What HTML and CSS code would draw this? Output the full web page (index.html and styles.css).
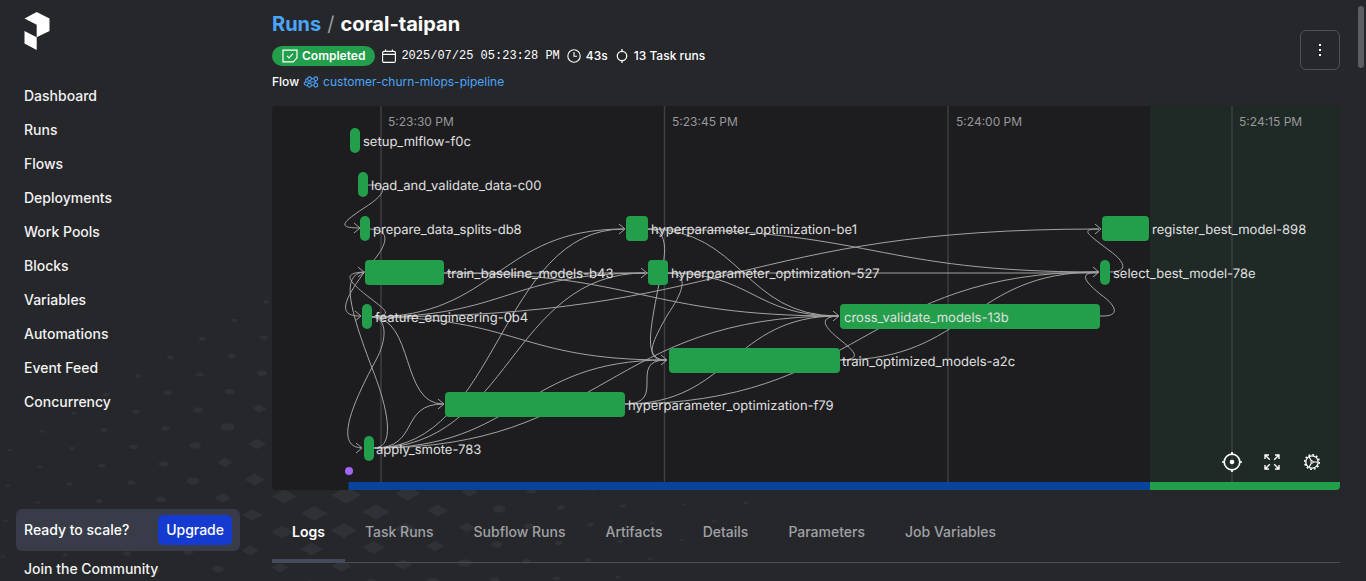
FILE: index.html
```html
<!DOCTYPE html>
<html lang="en">
<head>
<meta charset="utf-8">
<title>Runs / coral-taipan</title>
<link rel="stylesheet" href="styles.css">
</head>
<body>
<svg class="backdrop" id="backdrop" aria-hidden="true"></svg>
<div class="app">
  <aside class="sidebar">
    <a class="logo" href="#" aria-label="Home">
      <svg width="26" height="38" viewBox="0 0 26 38" fill="#fff"><path d="M12.7 0 25.5 6.5V19L12.7 25.3V12.7L.5 6.5zM.5 19 12.7 25.3V38L.5 31.5z"/></svg>
    </a>
    <nav class="nav">
      <a href="#">Dashboard</a>
      <a href="#">Runs</a>
      <a href="#">Flows</a>
      <a href="#">Deployments</a>
      <a href="#">Work Pools</a>
      <a href="#">Blocks</a>
      <a href="#">Variables</a>
      <a href="#">Automations</a>
      <a href="#">Event Feed</a>
      <a href="#">Concurrency</a>
    </nav>
    <div class="upgrade">
      <span>Ready to scale?</span>
      <button type="button" class="upgrade-button">Upgrade</button>
    </div>
    <nav class="nav"><a href="#">Join the Community</a></nav>
  </aside>

  <main class="main">
    <header class="header">
      <div class="heading">
        <h1 class="crumbs"><a href="#">Runs</a><span class="slash">/</span><span>coral-taipan</span></h1>
        <div class="meta">
          <span class="badge">
            <svg width="16" height="14" viewBox="0 0 16 14" fill="none" stroke="currentColor" stroke-width="1.2"><path d="M1 1.2h14v7.6L11.200 12.800H1z"/><path d="m5 6.800 2 2L11 4.600"/></svg>
            Completed
          </span>
          <span class="meta-item">
            <svg width="14" height="14" viewBox="0 0 14 14" fill="none" stroke="currentColor" stroke-width="1.1"><rect x=".6" y="2.4" width="12.8" height="11" rx="1.4"/><path d="M.6 5.4h12.8M3.6.4v2M10.4.4v2"/></svg>
            <time class="mono">2025/07/25 05:23:28 PM</time>
          </span>
          <span class="meta-item">
            <svg width="14" height="14" viewBox="0 0 14 14" fill="none" stroke="currentColor" stroke-width="1.1"><circle cx="7" cy="7" r="6.2"/><path d="M7 3v4.2h3"/></svg>
            43s
          </span>
          <span class="meta-item">
            <svg width="14" height="14" viewBox="0 0 14 14" fill="none" stroke="currentColor" stroke-width="1.3"><circle cx="7" cy="7" r="4.7"/><path d="M7 0v2.3M7 11.7V14"/></svg>
            13 Task runs
          </span>
        </div>
        <div class="flow-row">
          <span>Flow</span>
          <svg class="flow-icon" width="16" height="12" viewBox="0 0 16 12" fill="none" stroke="currentColor" stroke-width="1.100"><circle cx="6.500" cy="2.800" r="1.900"/><circle cx="12.800" cy="2.800" r="1.900"/><circle cx="6.500" cy="9.200" r="1.900"/><circle cx="12.800" cy="9.200" r="1.900"/><path d="M8.400 2.800h2.500M8.400 9.200h2.500M4.600 2.800H3.600A1.700 1.700 0 0 0 3.600 6H12.800V4.700M4.600 9.200H3.200C.4 9.200.4 6 3.200 6"/></svg>
          <a href="#">customer-churn-mlops-pipeline</a>
        </div>
      </div>
      <button type="button" class="menu-button" aria-label="Run actions">
        <svg width="4" height="14" viewBox="0 0 4 14" fill="#fff"><path d="M1 1h2v2H1zM1 6h2v2H1zM1 11h2v2H1z"/></svg>
      </button>
    </header>

    <section class="graph" aria-label="Run graph">
      <svg class="graph-canvas" viewBox="272 106 1068 384">
        <rect class="after" x="1150" y="106" width="190" height="384"/>
        <path class="grid" d="M381 106V482M664.500 106V482M948 106V482M1232 106V482"/>
        <g class="ticks">
          <text x="388" y="126">5:23:30 PM</text>
          <text x="672" y="126">5:23:45 PM</text>
          <text x="956" y="126">5:24:00 PM</text>
          <text x="1239" y="126">5:24:15 PM</text>
        </g>
        <g class="edges">
          <path d="M368 185H374C390 186 382 197 364 208C340 224 338 228 361 228"/>
          <path d="M370 229C398 230 379 254 374 260C340 302 338 316 360 316"/>
          <path d="M371 317C396 316 384 309 370 298C345 279 344 273 364 272"/>
          <path d="M371 317C388 317 387 340 376 360C350 408 335 447 362 448"/>
          <path d="M374 448C396 448 388 408 372 368C350 310 340 274 364 272"/>
          <path d="M371 317C415 317 400 404 443 404"/>
          <path d="M371 317C497 317 497 229 624 229"/>
          <path d="M371 317C508 317 508 273 645 273"/>
          <path d="M371 317C518 317 518 360 666 360"/>
          <path d="M371 317C735 317 735 229 1099 229"/>
          <path d="M444 273H1098"/>
          <path d="M444 273C641 273 641 316 838 316"/>
          <path d="M648 229C873 229 873 272 1098 272"/>
          <path d="M648 229C743 229 743 316 838 316"/>
          <path d="M648 229C676 229 661 272 657 294C648 340 646 360 666 360"/>
          <path d="M668 273C753 273 753 316 838 316"/>
          <path d="M668 273C692 273 681 295 668 314C652 342 643 360 666 360"/>
          <path d="M625 404C668 404 627 360 666 360"/>
          <path d="M625 404C731 404 731 316 838 316"/>
          <path d="M625 404C862 404 862 272 1098 272"/>
          <path d="M840 360C867 360 850 348 838 338C822 325 820 317 838 316"/>
          <path d="M840 360C969 360 969 272 1098 272"/>
          <path d="M374 448C420 448 399 404 443 404"/>
          <path d="M374 448C499 448 499 229 624 229"/>
          <path d="M374 448C510 448 510 273 645 273"/>
          <path d="M374 448C520 448 520 360 666 360"/>
          <path d="M374 448C606 448 606 316 838 316"/>
          <path d="M1100 316C1122 317 1116 305 1100 294C1082 279 1080 273 1098 272"/>
          <path d="M1110 272C1130 272 1124 261 1110 251C1086 233 1080 229 1099 229"/>
          <path d="m354 223 6 5-6 5M358 267l6 5-6 5M355 311l6 5-6 5M356 443l6 5-6 5M438 399l6 5-6 5M619 224l6 5-6 5M641 268l6 5-6 5M661 355l6 5-6 5M833 311l6 5-6 5M1093 267l6 5-6 5M1095 224l6 5-6 5"/>
        </g>
        <g class="bars">
          <rect x="350" y="128" width="10" height="25" rx="5"/>
          <rect x="358" y="172" width="10" height="25" rx="5"/>
          <rect x="360" y="216" width="10" height="25" rx="5"/>
          <rect x="365" y="260" width="79" height="25" rx="4"/>
          <rect x="362" y="304" width="10" height="25" rx="5"/>
          <rect x="445" y="392" width="180" height="25" rx="4"/>
          <rect x="364" y="436" width="10" height="25" rx="5"/>
          <rect x="626" y="216" width="22" height="25" rx="4"/>
          <rect x="648" y="260" width="20" height="25" rx="4"/>
          <rect x="840" y="304" width="260" height="25" rx="4"/>
          <rect x="669" y="348" width="171" height="25" rx="4"/>
          <rect x="1102" y="216" width="47" height="25" rx="4"/>
          <rect x="1100" y="260" width="10" height="25" rx="5"/>
        </g>
        <g class="labels">
          <text x="363" y="146">setup_mlflow-f0c</text>
          <text x="371" y="190">load_and_validate_data-c00</text>
          <text x="373" y="234">prepare_data_splits-db8</text>
          <text x="447" y="278">train_baseline_models-b43</text>
          <text x="375" y="322">feature_engineering-0b4</text>
          <text x="628" y="410">hyperparameter_optimization-f79</text>
          <text x="376" y="454">apply_smote-783</text>
          <text x="651" y="234">hyperparameter_optimization-be1</text>
          <text x="671" y="278">hyperparameter_optimization-527</text>
          <text x="844" y="322">cross_validate_models-13b</text>
          <text x="842" y="366">train_optimized_models-a2c</text>
          <text x="1152" y="234">register_best_model-898</text>
          <text x="1113" y="278">select_best_model-78e</text>
        </g>
        <circle cx="349" cy="471" r="4" fill="#a566f5"/>
        <rect x="348.500" y="482" width="801.500" height="8" fill="#08439c"/>
        <rect x="1150" y="482" width="190" height="8" fill="#239e4b"/>
      </svg>
      <div class="graph-tools">
        <button type="button" aria-label="Center graph"><svg width="20" height="20" viewBox="0 0 20 20" fill="none" stroke="#fff" stroke-width="1.700"><circle cx="10" cy="10" r="7.800"/><circle cx="10" cy="10" r="2.300" fill="#fff" stroke="none"/><path d="M10 0v3M10 17v3M0 10h3M17 10h3"/></svg></button>
        <button type="button" aria-label="Full screen"><svg width="20" height="20" viewBox="0 0 20 20" fill="none" stroke="#fff" stroke-width="1.400"><path d="M3 7V3h4M3 3l4.800 4.800M13 3h4v4M17 3l-4.800 4.800M3 13v4h4M3 17l4.800-4.800M17 13v4h-4M17 17l-4.800-4.800"/></svg></button>
        <button type="button" aria-label="Graph settings"><svg width="20" height="20" viewBox="0 0 20 20" fill="none" stroke="#fff"><circle cx="10" cy="10" r="6.200" stroke-width="1.300"/><circle cx="10" cy="10" r="7.300" stroke-width="1.500" stroke-dasharray="1.900 1.922"/><circle cx="10" cy="10" r="1.200"/><path stroke-width="1.200" d="M11 10h5M9.500 9 7 4.700M9.500 11 7 15.300"/></svg></button>
      </div>
    </section>

    <div class="tabs" role="tablist">
      <button type="button" role="tab" class="tab active" aria-selected="true">Logs</button>
      <button type="button" role="tab" class="tab">Task Runs</button>
      <button type="button" role="tab" class="tab">Subflow Runs</button>
      <button type="button" role="tab" class="tab">Artifacts</button>
      <button type="button" role="tab" class="tab">Details</button>
      <button type="button" role="tab" class="tab">Parameters</button>
      <button type="button" role="tab" class="tab">Job Variables</button>
    </div>
  </main>
  <div class="scrollbar" aria-hidden="true"><div class="thumb"></div></div>
</div>
<script src="backdrop.js"></script>
</body>
</html>
```

FILE: styles.css
```css
* {
  box-sizing: border-box;
}

body {
  margin: 0;
  height: 100vh;
  overflow: hidden;
  background: #26272b;
  color: #fff;
  font-family: Inter, "Liberation Sans", sans-serif;
  font-size: 14px;
  line-height: 20px;
}

a {
  color: #4ba5fa;
  text-decoration: none;
}

button {
  margin: 0;
  padding: 0;
  border: 0;
  background: none;
  color: inherit;
  font: inherit;
}

svg {
  display: block;
  flex: none;
}

h1 {
  margin: 0;
}

.backdrop {
  position: absolute;
  inset: 0;
  width: 100%;
  height: 100%;
  fill: #303135;
}

.app {
  position: relative;
  display: flex;
  height: 100vh;
  overflow: hidden;
}

.sidebar {
  flex: none;
  width: 256px;
  padding: 12px 16px 0;
}

.logo {
  display: block;
  padding-left: 8px;
  margin-bottom: 29px;
}

.nav {
  display: flex;
  flex-direction: column;
}

.nav a {
  padding: 7px 8px;
  color: #f2f2f2;
  font-weight: 500;
}

.upgrade {
  display: flex;
  align-items: center;
  justify-content: space-between;
  margin: 90px 0 1px;
  padding: 6px 8px;
  border-radius: 6px;
  background: #383b48;
  font-weight: 500;
}

.upgrade-button {
  padding: 5px 8px;
  border-radius: 5px;
  background: #153acf;
}

.main {
  flex: 1;
  min-width: 0;
  padding: 8px 16px 0;
}

.header {
  display: flex;
  align-items: center;
  justify-content: space-between;
  margin-bottom: 14px;
}

.heading {
  display: flex;
  flex-direction: column;
  gap: 6px;
}

.crumbs {
  display: flex;
  gap: 6px;
  font-size: 20px;
  line-height: 32px;
  font-weight: 700;
}

.slash {
  color: #9b9ca0;
  font-weight: 400;
}

.meta {
  display: flex;
  align-items: center;
  gap: 7px;
  font-size: 12px;
  font-weight: 500;
}

.badge {
  display: flex;
  align-items: center;
  gap: 4px;
  padding: 0 10px;
  border-radius: 10px;
  background: #239e4b;
  font-weight: 600;
}

.meta-item {
  display: flex;
  align-items: center;
  gap: 5px;
}

.mono {
  font-family: "Liberation Mono", monospace;
}

.flow-row {
  display: flex;
  align-items: center;
  gap: 4px;
  font-size: 12px;
  font-weight: 500;
}

.flow-row a {
  font-weight: 400;
}

.flow-icon {
  color: #4ba5fa;
}

.menu-button {
  display: grid;
  place-items: center;
  width: 40px;
  height: 40px;
  border: 1px solid #505156;
  border-radius: 6px;
}

.graph {
  position: relative;
  overflow: hidden;
  border-radius: 4px;
  background: #1d1d1f;
}

.graph-canvas {
  width: 100%;
  height: auto;
}

.after {
  fill: #1f2a27;
}

.grid {
  stroke: #3c3c44;
  stroke-width: 1.5;
}

.ticks {
  fill: #98989b;
  font-size: 12px;
}

.edges {
  fill: none;
  stroke: #a3a3a3;
  stroke-width: 1;
}

.bars {
  fill: #239e4b;
}

.labels {
  fill: #e0e0e0;
  font-size: 13px;
  text-rendering: geometricPrecision;
}

.graph-tools {
  position: absolute;
  right: 18px;
  bottom: 18px;
  display: flex;
  gap: 20px;
}

.tabs {
  display: flex;
  margin-top: 16px;
  border-bottom: 1px solid #4c4d52;
}

.tab {
  padding: 16px 20px 17px;
  border-bottom: 4px solid transparent;
  margin-bottom: -1px;
  color: #a0a1a5;
  font-weight: 500;
}

.tab.active {
  border-color: #464a5d;
  color: #fff;
  font-weight: 600;
}

.scrollbar {
  flex: none;
  width: 10px;
  padding: 6px 2px;
}

.thumb {
  height: 62px;
  border-radius: 3px;
  background: #5c5d61;
}
```

FILE: backdrop.js
```js
// Halftone of diamonds on a skewed lattice, largest around (346, 494).
const stops = [[0, 15], [62, 12.5], [124, 8.5], [160, 6], [185, 4.7], [247, 3.5], [309, 2.4], [420, 2]];

function halfWidth(distance) {
  for (let k = 1; k < stops.length; k++) {
    const [d0, r0] = stops[k - 1];
    const [d1, r1] = stops[k];
    if (distance <= d1) return r0 + (r1 - r0) * (distance - d0) / (d1 - d0);
  }
  return 2;
}

const shapes = [];
for (let j = -14; j <= 0; j++) {
  for (let i = -13; i <= 12; i++) {
    const x = 746 - 32 * i + 61.7 * j;
    const y = 503 + 18.5 * i - 1.5 * j;
    if (x < -10 || y > 600 || y < 290) continue;
    const r = halfWidth(Math.hypot(x - 346, (y - 494) * 1.35));
    const h = r * 0.57;
    shapes.push(r > 7
      ? `<path d="M${x - r} ${y}L${x} ${y - h}L${x + r} ${y}L${x} ${y + h}z"/>`
      : `<ellipse cx="${x}" cy="${y}" rx="${r}" ry="${h}"/>`);
  }
}
document.getElementById("backdrop").innerHTML = shapes.join("");
```
